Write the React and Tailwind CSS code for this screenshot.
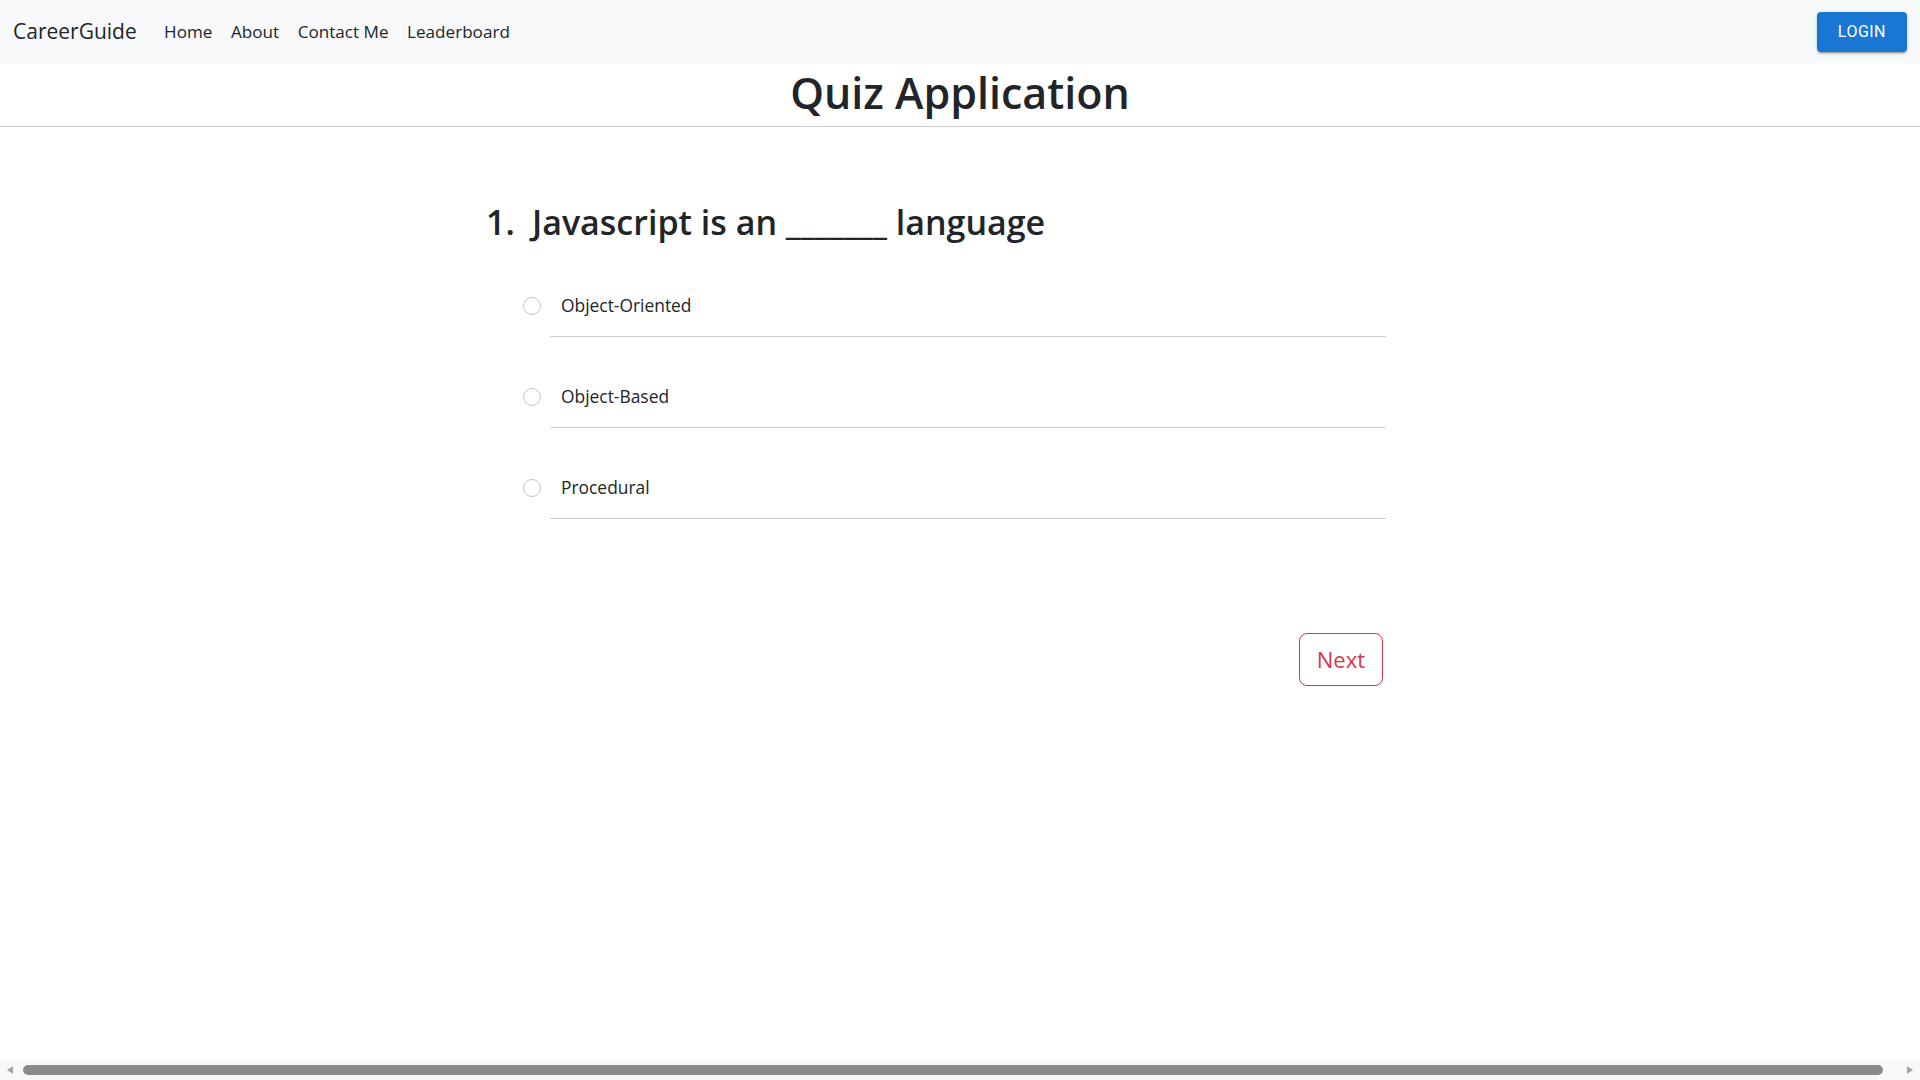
import React, { useState } from "react";

const options = ["Object-Oriented", "Object-Based", "Procedural"];
const navLinks = ["Home", "About", "Contact Me", "Leaderboard"];

export default function App() {
  const [selected, setSelected] = useState(null);

  return (
    <div className="h-screen w-full flex flex-col bg-white text-[#212529] font-['Open_Sans',sans-serif] overflow-hidden">
      <nav className="h-[63px] shrink-0 bg-[#f8f9fa] flex items-center justify-between px-[13px]">
        <div className="flex items-center">
          <a href="#" className="text-[21px] mr-[18px] text-[#212529] leading-none">
            CareerGuide
          </a>
          <ul className="flex items-center">
            {navLinks.map((link) => (
              <li key={link}>
                <a href="#" className="px-[9.3px] text-[17.1px] text-[#212529]">
                  {link}
                </a>
              </li>
            ))}
          </ul>
        </div>
        <button
          type="button"
          className="h-[40px] px-[21px] rounded-[4px] bg-[#1976d2] text-white text-[16px] font-normal tracking-[0.03em] font-['Roboto',sans-serif] shadow-[0_3px_1px_-2px_rgba(0,0,0,0.2),0_2px_2px_0_rgba(0,0,0,0.14),0_1px_5px_0_rgba(0,0,0,0.12)]"
        >
          LOGIN
        </button>
      </nav>

      <div className="h-[64px] shrink-0 flex items-center justify-center pb-[4px] border-b border-[#cccccc]">
        <h1 className="text-[43px] font-semibold leading-[1.2]">Quiz Application</h1>
      </div>

      <main className="flex-1">
        <div className="w-[948px] mx-auto">
          <h2 className="mt-[75px] text-[34px] font-semibold leading-[1.2] flex">
            <span className="w-[46px]">1.</span>
            <span>Javascript is an _______ language</span>
          </h2>
          <ul className="mt-[3px] pl-[37px] w-[900px]">
            {options.map((opt, i) => (
              <li key={opt} className="flex items-end">
                <button
                  type="button"
                  onClick={() => setSelected(i)}
                  className="mb-[22px] w-[18px] h-[18px] rounded-full border border-[#c4c4c4] bg-white shrink-0 flex items-center justify-center"
                >
                  {selected === i && <span className="w-[8px] h-[8px] rounded-full bg-[#0d6efd]" />}
                </button>
                <div className="ml-[9px] flex-1 pl-[11px] pt-[46px] pb-[18px] border-b border-[#cccccc] text-[17.4px] leading-[1.5]">
                  {opt}
                </div>
              </li>
            ))}
          </ul>
          <div className="w-[897px] flex justify-end mt-[114px]">
            <button
              type="button"
              className="px-[17px] py-[9px] rounded-[8px] border border-[#dc3545] text-[#dc3545] text-[22px] leading-[1.5]"
            >
              Next
            </button>
          </div>
        </div>
      </main>

      <div className="h-[21px] shrink-0 bg-[#f8f8f8] flex items-center px-[7px] gap-[10px]">
        <svg width="6" height="8" viewBox="0 0 6 8">
          <path d="M6 0 L0 4 L6 8 Z" fill="#a3a3a3" />
        </svg>
        <div className="flex-1 h-[10px] rounded-full bg-[#8a8a8a] mr-[14px]" />
        <svg width="6" height="8" viewBox="0 0 6 8">
          <path d="M0 0 L6 4 L0 8 Z" fill="#a3a3a3" />
        </svg>
      </div>
    </div>
  );
}
